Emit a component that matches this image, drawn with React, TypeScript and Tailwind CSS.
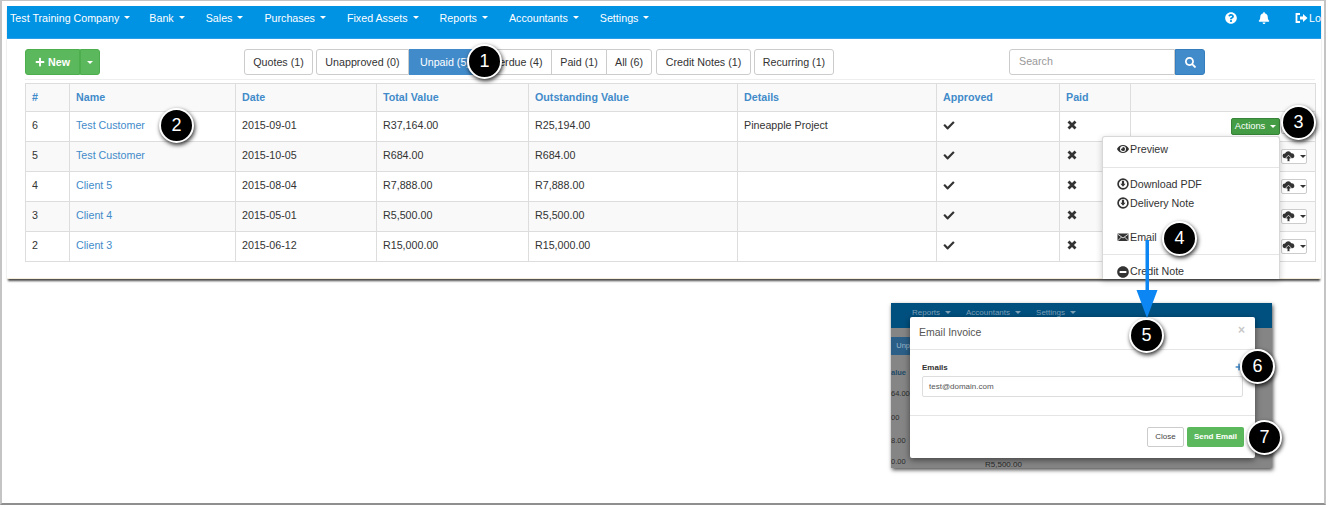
import { FaPlus, FaCheck, FaEye, FaMinusCircle, FaBell, FaQuestionCircle, FaSearch } from 'react-icons/fa';

const navItems = ['Bank', 'Sales', 'Purchases', 'Fixed Assets', 'Reports', 'Accountants', 'Settings'];

const rows = [
  { id: 6, name: 'Test Customer', date: '2015-09-01', total: 'R37,164.00', outstanding: 'R25,194.00', details: 'Pineapple Project' },
  { id: 5, name: 'Test Customer', date: '2015-10-05', total: 'R684.00', outstanding: 'R684.00', details: '' },
  { id: 4, name: 'Client 5', date: '2015-08-04', total: 'R7,888.00', outstanding: 'R7,888.00', details: '' },
  { id: 3, name: 'Client 4', date: '2015-05-01', total: 'R5,500.00', outstanding: 'R5,500.00', details: '' },
  { id: 2, name: 'Client 3', date: '2015-06-12', total: 'R15,000.00', outstanding: 'R15,000.00', details: '' },
];

const headers = ['#', 'Name', 'Date', 'Total Value', 'Outstanding Value', 'Details', 'Approved', 'Paid', ''];

const Caret = () => <span className="ml-[5px] inline-block h-0 w-0 border-x-[3px] border-t-[3px] border-x-transparent border-t-current align-middle" />;

// numbered black bubble used all over the annotated screenshot
const Callout = ({ n, className }: { n: number; className: string }) => (
  <div className={`absolute z-30 flex h-[35px] w-[35px] items-center justify-center rounded-full border-2 border-white bg-black text-[18px] text-white shadow-[1px_2px_4px_rgba(0,0,0,0.8)] ${className}`}>
    {n}
  </div>
);

const DownloadIcon = () => (
  <svg viewBox="0 0 12 12" className="mb-[2px] h-[12px] w-[12px]">
    <circle cx="6" cy="6" r="4.9" fill="none" stroke="#333" strokeWidth="1.7" />
    <path d="M4.9 2.8h2.2v3h1.5L6 8.8 3.4 5.8h1.5z" fill="#333" />
  </svg>
);

const EnvelopeIcon = () => (
  <svg viewBox="0 0 12 12" className="mb-[2px] h-[12px] w-[12px]">
    <path d="M0.5 2.5h11v7.5h-11z" fill="#333" />
    <path d="M0.5 3l5.5 4 5.5-4M0.5 10l4-4M11.5 10l-4-4" fill="none" stroke="white" strokeWidth="0.8" />
  </svg>
);

const CrossIcon = () => (
  <svg viewBox="0 0 10 10" className="h-[10px] w-[10px]">
    <path d="M1.5 1.5l7 7M8.5 1.5l-7 7" stroke="#333" strokeWidth="2.8" />
  </svg>
);

const CloudIcon = () => (
  <svg viewBox="0 0 14 12" className="h-[11px] w-[13px]">
    <path d="M3 8a2.6 2.6 0 0 1 .2-5.2A3.7 3.7 0 0 1 10 2.4 2.8 2.8 0 0 1 11 8z" fill="#333" />
    <path d="M7 4.6L3.3 8.4h2.2v3.1h3V8.4h2.2z" fill="#333" stroke="white" strokeWidth="0.8" />
  </svg>
);

const MenuRow = ({ icon, label }: { icon: React.ReactNode; label: string }) => (
  <div className="flex h-[19px] items-center gap-px pl-[14px] text-[10.7px] text-[#333]">
    <span className="flex w-[12px] items-center">{icon}</span>
    {label}
  </div>
);

const App = () => {
  return (
    <div className="relative h-[507px] w-[1328px] overflow-hidden bg-white font-['Liberation_Sans',Arial,sans-serif] text-[10.7px] text-[#333]">
      <div className="h-[505px] w-[1326px] border-x-2 border-b-2 border-t border-[#c4c4c4] border-b-[#8f8f8f] pl-[5px] pr-[4px] pt-[5px]">
        {/* Main app screenshot */}
        <div className="relative h-[273px] w-[1314px] border-b border-[#f6eedd] bg-white shadow-[0_3px_2px_-1px_rgba(40,40,40,0.85)]">
          <div className="flex h-[33px] items-center border-b border-[#2b9fe8] bg-[#0092e3] pb-[8px] pl-[3px] text-white">
            <span className="flex items-center">Test Training Company<Caret /></span>
            <div className="ml-[19px] flex gap-[21px]">
              {navItems.map((item) => (
                <span key={item} className="flex items-center">{item}<Caret /></span>
              ))}
            </div>
            <div className="ml-auto flex items-center">
              <FaQuestionCircle className="mr-[21px] h-[12px] w-[12px]" />
              <FaBell className="mr-[24px] h-[12px] w-[12px]" />
              <svg viewBox="0 0 14 12" className="mr-[1px] h-[12px] w-[14px]">
                <path d="M6 2H2.5v8H6" fill="none" stroke="white" strokeWidth="1.8" />
                <path d="M6 4.5h3V2l4.5 4-4.5 4V7.5H6z" fill="white" />
              </svg>
              <span className="w-[12px]">Lo</span>
            </div>
          </div>

          {/* Toolbar */}
          <div className="ml-[18px] mr-[6px] mt-[10px] flex h-[31px] items-start border-b border-[#eeeeee]">
            <div className="flex h-[26px] text-white">
              <button className="flex w-[55px] items-center justify-center gap-[3px] rounded-l-[3px] border border-[#4cae4c] bg-[#5cb85c] font-bold">
                <FaPlus className="h-[10px] w-[10px]" />New
              </button>
              <button className="flex w-[20px] items-center justify-center rounded-r-[3px] border border-[#4cae4c] bg-[#5cb85c]">
                <span className="inline-block h-0 w-0 border-x-[3px] border-t-[3px] border-x-transparent border-t-white" />
              </button>
            </div>
            <div className="ml-[144px] flex h-[26px] gap-[3px]">
              <button className="w-[69px] rounded-[3px] border border-[#cccccc] bg-white">Quotes (1)</button>
              <div className="flex">
                <button className="w-[93px] rounded-l-[3px] border border-[#cccccc] bg-white">Unapproved (0)</button>
                <button className="w-[67px] border border-[#428bca] bg-[#428bca] pl-[10px] text-left text-white">Unpaid (5)</button>
                <button className="w-[76px] border border-[#cccccc] bg-white">Overdue (4)</button>
                <button className="-ml-px w-[56px] border border-[#cccccc] bg-white">Paid (1)</button>
                <button className="-ml-px w-[46px] rounded-r-[3px] border border-[#cccccc] bg-white">All (6)</button>
              </div>
              <button className="ml-[1px] w-[95px] rounded-[3px] border border-[#cccccc] bg-white">Credit Notes (1)</button>
              <button className="w-[80px] rounded-[3px] border border-[#cccccc] bg-white">Recurring (1)</button>
            </div>
            <div className="ml-[175px] flex h-[26px]">
              <div className="flex w-[166px] items-center rounded-l-[3px] border border-[#cccccc] bg-white pb-px pl-[9px] text-[#999999]">Search</div>
              <button className="flex w-[30px] items-center justify-center rounded-r-[3px] border border-[#357ebd] bg-[#428bca] text-white">
                <FaSearch className="h-[11px] w-[11px]" />
              </button>
            </div>
          </div>

          {/* Invoices table */}
          <table className="ml-[18px] mt-[3px] w-[1290px] table-fixed border-collapse">
            <colgroup>
              <col className="w-[44px]" />
              <col className="w-[166px]" />
              <col className="w-[141px]" />
              <col className="w-[152px]" />
              <col className="w-[209px]" />
              <col className="w-[199px]" />
              <col className="w-[123px]" />
              <col className="w-[71px]" />
              <col className="w-[185px]" />
            </colgroup>
            <thead>
              <tr className="h-[28px] bg-[#f9f9f9]">
                {headers.map((h, i) => (
                  <th key={i} className="border border-[#dddddd] pl-[6px] text-left font-bold text-[#428bca]">{h}</th>
                ))}
              </tr>
            </thead>
            <tbody>
              {rows.map((row, i) => (
                <tr key={row.id} className={`h-[30px] ${i % 2 === 1 ? 'bg-[#f9f9f9]' : 'bg-white'}`}>
                  <td className="border border-[#dddddd] pb-[2px] pl-[6px]">{row.id}</td>
                  <td className="border border-[#dddddd] pb-[2px] pl-[6px] text-[#428bca]">{row.name}</td>
                  <td className="border border-[#dddddd] pb-[2px] pl-[6px]">{row.date}</td>
                  <td className="border border-[#dddddd] pb-[2px] pl-[6px]">{row.total}</td>
                  <td className="border border-[#dddddd] pb-[2px] pl-[6px]">{row.outstanding}</td>
                  <td className="border border-[#dddddd] pb-[2px] pl-[6px]">{row.details}</td>
                  <td className="border border-[#dddddd] pb-[3px] pl-[6px]"><FaCheck className="h-[11px] w-[12px]" /></td>
                  <td className="border border-[#dddddd] pb-[4px] pl-[7px]"><CrossIcon /></td>
                  <td className="border border-[#dddddd] pr-[8px]">
                    <div className="flex items-center justify-end">
                      <button className="flex h-[17px] w-[49px] items-center justify-center rounded-[2px] border border-[#398439] bg-[#449d44] text-[9.3px] text-white">Actions<Caret /></button>
                      <button className="ml-px flex h-[15px] w-[26px] items-center justify-center rounded-[2px] border border-[#cccccc] bg-white"><CloudIcon /><Caret /></button>
                    </div>
                  </td>
                </tr>
              ))}
            </tbody>
          </table>

          {/* Open actions dropdown, clipped by the edge of the screenshot */}
          <div className="absolute left-[1095px] top-[130px] z-10 h-[143px] w-[178px] overflow-hidden rounded-t-[3px] border-x border-t border-[#d8d8d8] bg-white pt-[3px] shadow-[0_2px_6px_rgba(0,0,0,0.2)]">
            <MenuRow icon={<FaEye className="mb-[2px] h-[12px] w-[12px]" />} label="Preview" />
            <div className="mb-[7px] mt-[8px] h-px bg-[#e5e5e5]" />
            <MenuRow icon={<DownloadIcon />} label="Download PDF" />
            <MenuRow icon={<DownloadIcon />} label="Delivery Note" />
            <div className="h-[15px]" />
            <MenuRow icon={<EnvelopeIcon />} label="Email" />
            <div className="mb-[7px] mt-[7px] h-px bg-[#e5e5e5]" />
            <MenuRow icon={<FaMinusCircle className="h-[12px] w-[12px]" />} label="Credit Note" />
          </div>

          <Callout n={1} className="left-[460px] top-[38px]" />
          <Callout n={2} className="left-[152px] top-[102px]" />
          <Callout n={3} className="left-[1274px] top-[99px]" />
          <Callout n={4} className="left-[1155px] top-[215px]" />
        </div>

        {/* Inset screenshot of the email dialog */}
        <div className="relative ml-[884px] mt-[24px] h-[165px] w-[381px] overflow-hidden bg-[#858585] text-[7.5px] text-[#2b2b2b] shadow-[1px_2px_4px_rgba(0,0,0,0.7)]">
          <div className="flex h-[25px] items-start gap-[15px] bg-[#00507f] pl-[21px] pt-[4px] text-[8px] text-[#7d9fb6]">
            <span>Reports<Caret /></span>
            <span>Accountants<Caret /></span>
            <span>Settings<Caret /></span>
          </div>
          <div className="mt-[9px] flex h-[18px] w-[19px] items-center justify-end bg-[#2b5f88] text-[#9db6c8]">Unp</div>
          <div className="mt-[10px] flex h-[16px] w-[19px] items-center font-bold text-[#1f4a68]">alue</div>
          <div className="mt-[5px] flex h-[16px] w-[19px] items-center">64.00</div>
          <div className="mt-[8px] flex h-[16px] w-[19px] items-center">00</div>
          <div className="mt-[7px] flex h-[16px] w-[19px] items-center">8.00</div>
          <div className="mt-[7px] flex h-[12px] w-[19px] items-center">0.00</div>
          <div className="absolute left-[94px] top-[156px] text-[8px]">R5,500.00</div>

          <div className="absolute left-[19px] top-[14px] h-[141px] w-[345px] rounded-[2px] bg-white text-[8px] text-[#333] shadow-[0_2px_6px_rgba(0,0,0,0.5)]">
            <div className="flex h-[33px] items-center justify-between border-b border-[#e5e5e5] pl-[9px] pr-[10px]">
              <span className="text-[10.5px] text-[#555]">Email Invoice</span>
              <span className="mb-[7px] text-[12px] font-bold text-[#c8c8c8]">×</span>
            </div>
            <div className="h-[66px] border-b border-[#e5e5e5] px-[12px] pt-[12px]">
              <div className="mb-[2px] font-bold">Emails</div>
              <div className="flex h-[21px] items-center rounded-[2px] border border-[#dddddd] pl-[6px] text-[#555]">test@domain.com</div>
            </div>
            <div className="flex justify-end gap-[3px] pr-[11px] pt-[11px]">
              <button className="h-[20px] w-[37px] rounded-[2px] border border-[#cccccc] bg-white text-[#444]">Close</button>
              <button className="h-[20px] w-[57px] rounded-[2px] bg-[#5cb85c] font-bold text-white">Send Email</button>
            </div>
          </div>
        </div>
      </div>

      {/* Arrow from Email to the dialog */}
      <svg viewBox="0 0 24 80" className="absolute left-[1135px] top-[240px] z-20 h-[80px] w-[24px]">
        <path d="M10.5 0h3.5v52h-3.5z" fill="#0b86f2" />
        <path d="M1.5 50h21L12 78z" fill="#0b86f2" />
      </svg>
      <FaPlus className="absolute left-[1235px] top-[363px] z-20 h-[8px] w-[8px] text-[#428bca]" />

      <Callout n={5} className="left-[1129px] top-[318px]" />
      <Callout n={6} className="left-[1240px] top-[349px]" />
      <Callout n={7} className="left-[1247px] top-[420px]" />
    </div>
  );
};

export default App;
